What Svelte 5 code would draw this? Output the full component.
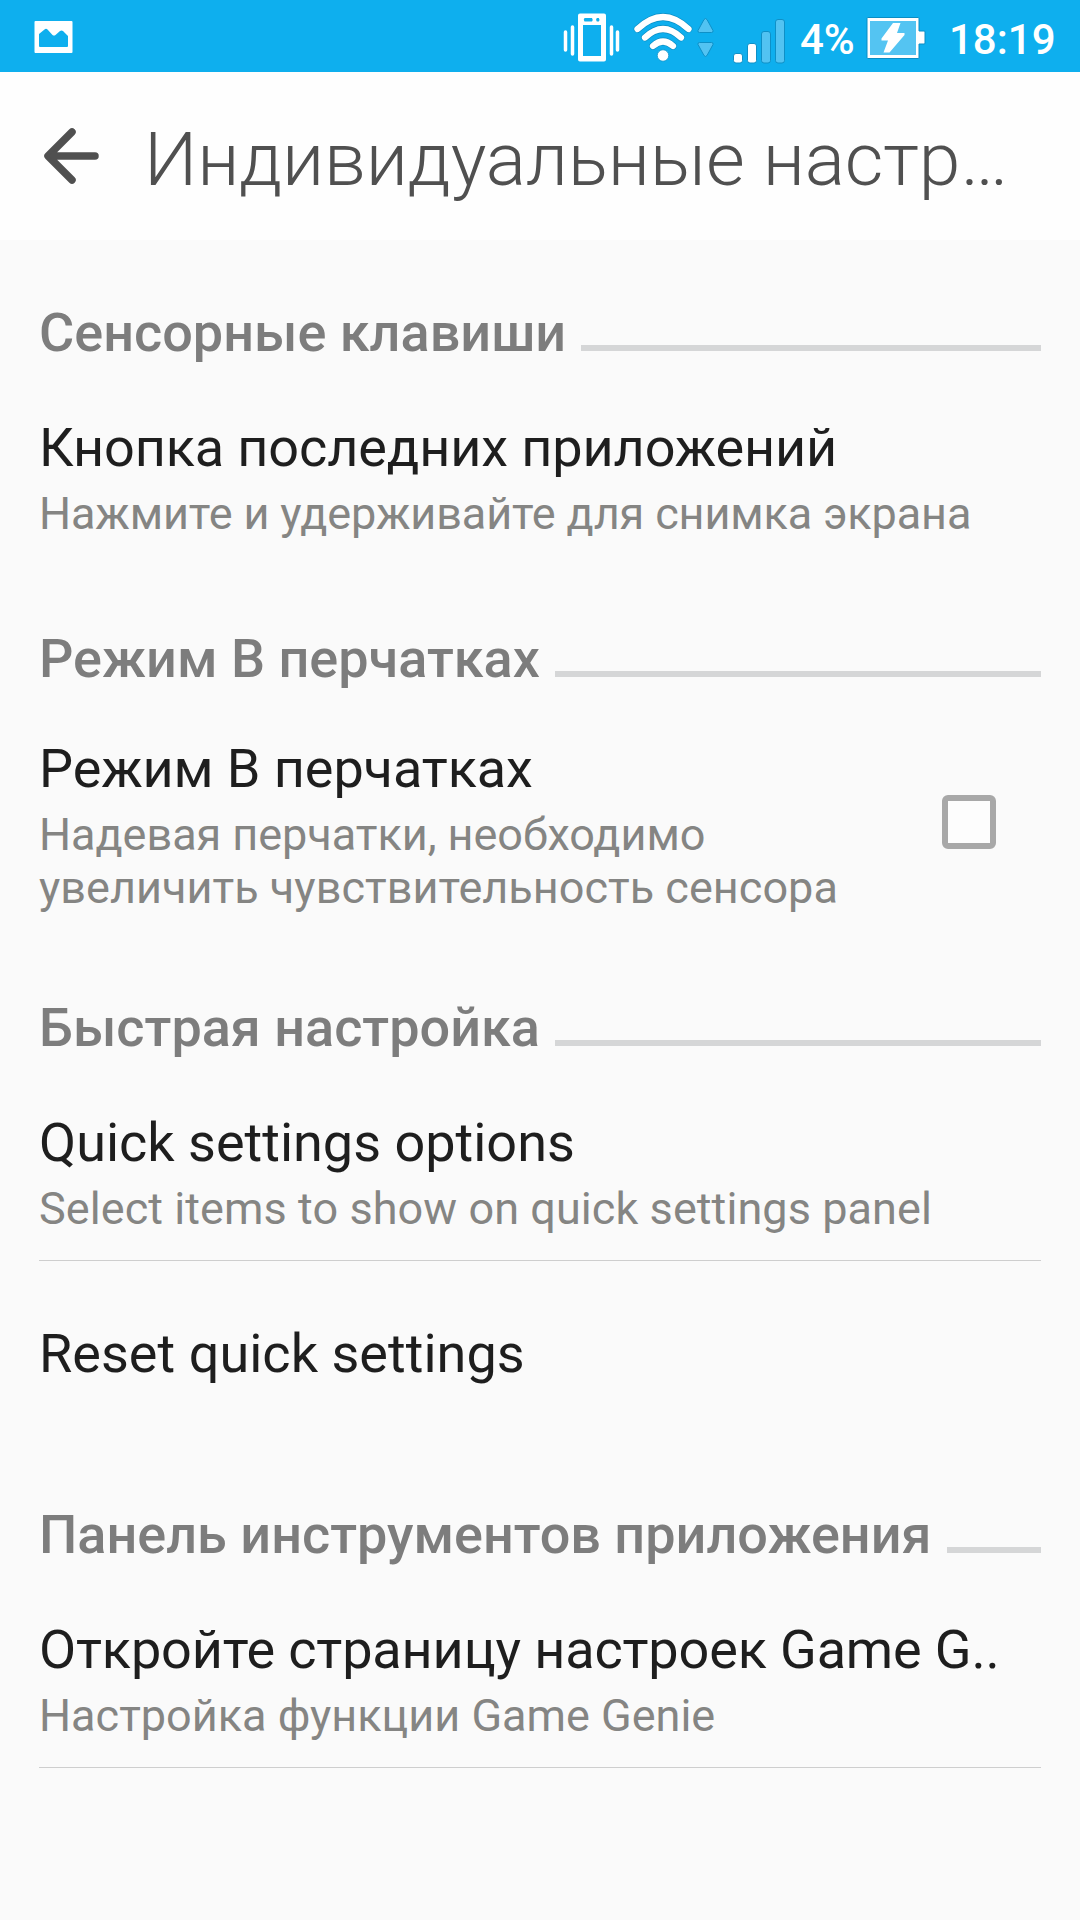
<script>
    // tracking values are letter spacing in px
    const sections = [
        {
            title: 'Сенсорные клавиши',
            items: [
                { title: 'Кнопка последних приложений', tracking: -0.12, summary: [{ text: 'Нажмите и удерживайте для снимка экрана', tracking: -0.11 }] },
            ],
        },
        {
            title: 'Режим В перчатках',
            compact: true,
            items: [
                {
                    title: 'Режим В перчатках',
                    tracking: -0.08,
                    summary: [
                        { text: 'Надевая перчатки, необходимо', tracking: -0.04 },
                        { text: 'увеличить чувствительность сенсора', tracking: 0.03 },
                    ],
                    checkbox: true,
                },
            ],
        },
        {
            title: 'Быстрая настройка',
            items: [
                { title: 'Quick settings options', tracking: 0, summary: [{ text: 'Select items to show on quick settings panel', tracking: 0.07 }], divider: true },
                { title: 'Reset quick settings', tracking: 0.03, summary: [] },
            ],
        },
        {
            title: 'Панель инструментов приложения',
            items: [
                { title: 'Откройте страницу настроек Game G..', tracking: -0.14, summary: [{ text: 'Настройка функции Game Genie', tracking: 0 }], divider: true },
            ],
        },
    ]

    let gloveMode = $state(false)
</script>

<div class='screen'>
    <div class='status-bar'>
        <svg class='picture' width='40' height='33' viewBox='0 0 40 33'>
            <path fill='#fff' fill-rule='evenodd' d='M1.500 1 h36 q1 0 1 1 v30 q0 1 -1 1 h-36 q-1 0 -1 -1 v-30 q0 -1 1 -1 z M5 14 v12 q0 1 1 1 h27 q1 0 1 -1 v-10 l-5 -5 q-1.500 -1 -3 0 l-4.500 4 q-1.500 1 -3 0 l-5 -5.500 q-1.500 -1.500 -3 0 z' />
        </svg>
        <svg width='275' height='72' viewBox='0 0 275 72'>
            <!-- vibrate -->
            <path fill='#fff' fill-rule='evenodd' d='M20 13.500 h24 q2 0 2 2 v44 q0 2 -2 2 h-24 q-2 0 -2 -2 v-44 q0 -2 2 -2 z M23 25 v31 h18 v-31 z M24.500 18 q-1.500 1.500 0 3.500 h7.500 q1.500 -1.500 0 -3.500 z M36.800 18 q-1.500 1.500 0 3.500 h2 q1.500 -1.500 0 -3.500 z' />
            <path stroke='#fff' stroke-width='3.500' stroke-linecap='round' d='M5.500 32 v18 M12.500 27 v27 M51.500 27 v27 M57.500 32 v18' />
            <!-- wifi -->
            <g fill='none' stroke-linecap='round'>
                <path stroke='#098dc4' stroke-width='7.500' d='M77.500 29 q25.500 -24 51 0 M85 37.500 q18 -17 36 0 M93 46 q10 -9 20 0' />
                <path stroke='#fff' stroke-width='6.300' d='M77.500 29 q25.500 -24 51 0 M85 37.500 q18 -17 36 0 M93 46 q10 -9 20 0' />
            </g>
            <circle cx='103' cy='55.500' r='5.700' fill='#fff' stroke='#098dc4' stroke-width='.7' />
            <g fill='#52c3f2' stroke='#0e90c7'>
                <path d='M144 19.500 q1.500 -2 3 0 l6 11 q.5 2 -1.500 2 h-12 q-2 0 -1.500 -2 z' />
                <path d='M144 55.500 q1.500 2 3 0 l6 -11 q.5 -2 -1.500 -2 h-12 q-2 0 -1.500 2 z' />
                <!-- signal -->
                <rect x='173.500' y='53.500' width='9' height='9.500' rx='2.500' fill='#fff' />
                <rect x='187.500' y='43.500' width='9' height='19.500' rx='2.500' fill='#fff' />
                <rect x='201.500' y='31.500' width='9' height='31.500' rx='2.500' />
                <rect x='215.500' y='19.500' width='9' height='43.500' rx='2.500' />
            </g>
        </svg>
        <span class='percent'>4%</span>
        <svg class='battery' width='60' height='44' viewBox='0 0 60 44'>
            <path d='M2 1.500 h50 q1 0 1 1 v12.500 h5 q1 0 1 1 v11 q0 1 -1 1 h-5 v13.500 q0 1 -1 1 h-50 q-1 0 -1 -1 v-39 q0 -1 1 -1 z' fill='#fff' stroke='#098dc4' />
            <rect x='4' y='5' width='46' height='34' fill='#54c4f2' />
            <path d='M27 7 h7.500 l-3.500 10 h7.500 v2 l-15 17.500 h-6 l4.500 -12 h-6.500 v-2 z' fill='#fff' />
        </svg>
        <span class='clock'>18:19</span>
    </div>

    <div class='toolbar'>
        <svg width='58' height='60' viewBox='0 0 58 60'>
            <path d='M29 6 L5 30 L29 54 M7 30 H52' />
            <path class='tip' d='M5 30 l8 -7 v14 z' />
        </svg>
        <h1>Индивидуальные настр…</h1>
    </div>

    {#each sections as section}
        <section class:compact={ section.compact }>
            <h2>{ section.title }<span class='rule'></span></h2>
            {#each section.items as item}
                <div class='item' class:divider={ item.divider } class:single={ !item.summary.length }>
                    <div class='text'>
                        <div class='title' style='letter-spacing: { item.tracking }px'>{ item.title }</div>
                        {#each item.summary as line}
                            <div class='summary' style='letter-spacing: { line.tracking }px'>{ line.text }</div>
                        {/each}
                    </div>
                    {#if item.checkbox}
                        <input type='checkbox' aria-label={ item.title } bind:checked={ gloveMode } />
                    {/if}
                </div>
            {/each}
        </section>
    {/each}
</div>

<style>
    :global(body) {
        background: #fafafa;
    }

    .screen {
        width: 1080px;
        height: 1920px;
        overflow: hidden;
        background: #fafafa;
        font-family: Roboto, sans-serif;
        color: #1e1e1e;
    }

    .status-bar {
        display: flex;
        height: 72px;
        padding-left: 34px;
        background: #0eafee;
        color: #fff;
        font-size: 42px;
        font-weight: 500;
        line-height: 79px;
        white-space: nowrap;
    }

    .picture {
        margin: 20px 486px 0 0;
    }

    .status-bar svg {
        flex: none;
    }

    .percent {
        width: 65px;
        margin-left: -35px;
    }

    .battery {
        margin: 16px 23px 0 1px;
    }

    .toolbar {
        display: flex;
        height: 168px;
        padding: 0 60px 0 43px;
        background: #fefefe;
    }

    .toolbar svg {
        flex: none;
        margin: 54px 43px 0 0;
        fill: none;
        stroke: #505050;
        stroke-width: 7.500;
        stroke-linecap: round;
        stroke-linejoin: round;
    }

    .toolbar .tip {
        fill: #505050;
        stroke-width: 1;
    }

    h1 {
        margin: 0;
        color: #505050;
        font-size: 75px;
        font-weight: 300;
        letter-spacing: -.15px;
        line-height: 174px;
        white-space: nowrap;
    }

    section {
        padding: 61px 39px 0;
    }

    h2 {
        display: flex;
        align-items: baseline;
        gap: 15px;
        margin: 0;
        color: #7d7d7d;
        font-size: 54px;
        font-weight: 500;
        line-height: 64px;
        white-space: nowrap;
    }

    .rule {
        flex: 1;
        height: 6px;
        background: #d5d6d7;
    }

    .item {
        display: flex;
        align-items: flex-start;
        justify-content: space-between;
        height: 201px;
        box-sizing: border-box;
        padding-top: 51px;
    }

    .compact .item {
        height: 244px;
        padding-top: 46px;
    }

    .item.single {
        height: 181px;
        padding-top: 61px;
    }

    .divider {
        border-bottom: 1px solid #cecece;
    }

    .title {
        font-size: 54px;
        line-height: 64px;
        white-space: nowrap;
    }

    .summary {
        color: #858583;
        font-size: 45px;
        line-height: 53px;
        white-space: nowrap;
    }

    .title + .summary {
        margin-top: 7px;
    }

    input {
        appearance: none;
        width: 54px;
        height: 54px;
        margin: 58px 45px 0 0;
        border: 6px solid #a8a8a8;
        border-radius: 6px;
        background: #fdfdfd;
    }
</style>
